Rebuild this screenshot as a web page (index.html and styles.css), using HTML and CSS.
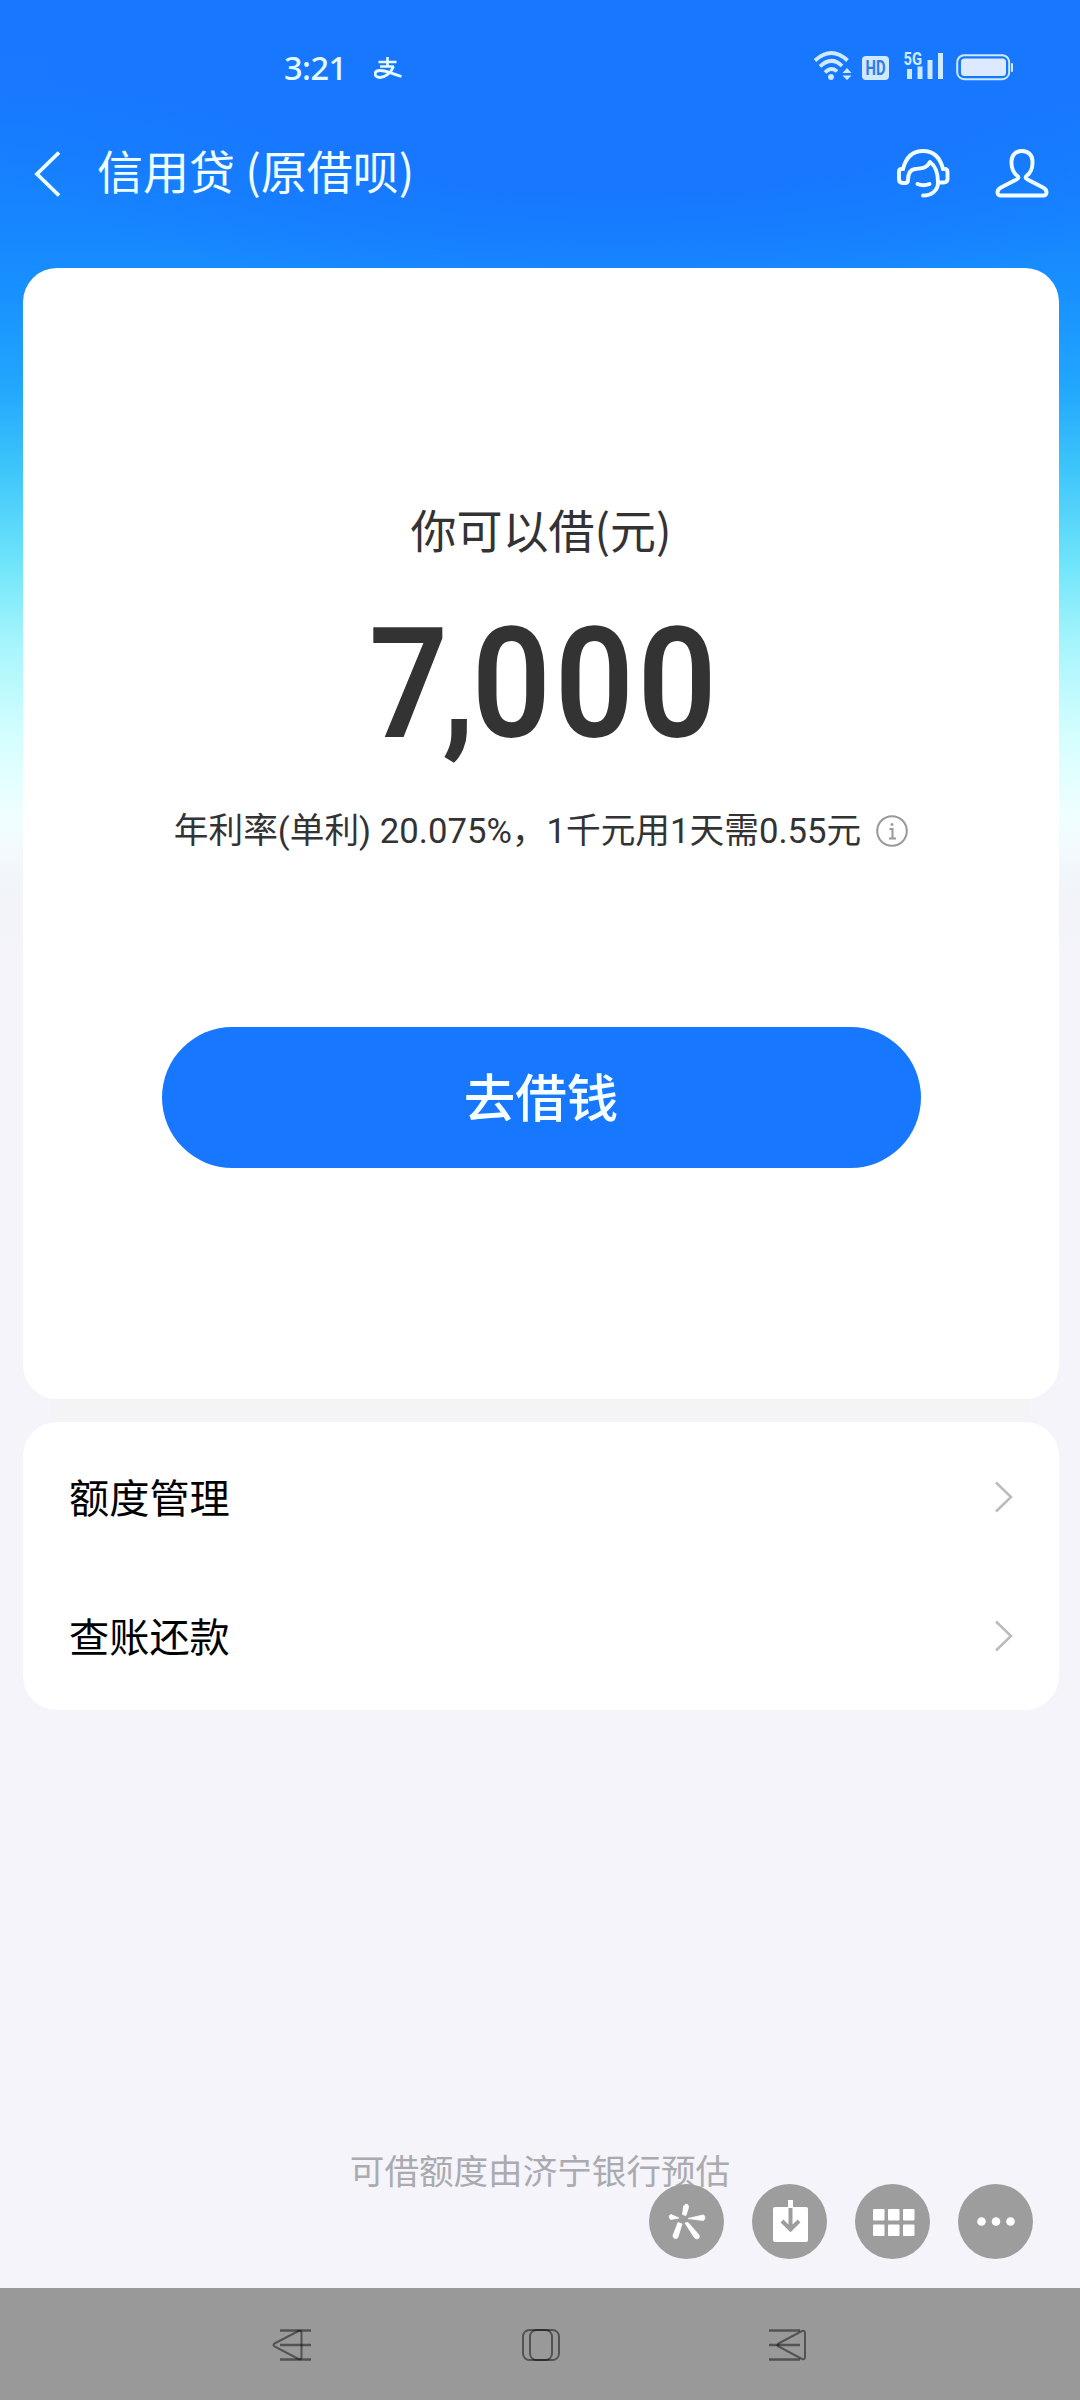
FILE: index.html
```html
<!DOCTYPE html>
<html lang="zh-CN">
<head>
<meta charset="utf-8">
<title>信用贷</title>
<link rel="stylesheet" href="styles.css">
</head>
<body>
<div class="screen">
  <div class="status">
    <span class="clock">3:21</span>
    <svg class="pay" viewBox="0 0 28 22" width="28" height="22" fill="none" stroke="#e6fbff"><path d="M4.500 5h18M13.500 0v9.500M6 9.500h14" stroke-width="2.600"/><path d="M19.500 9.500C17 16 11 20.500 6 20.500c-6.500 0-6.500-7 0-7 6 0 13 3.500 21.500 6" stroke-width="2.800"/></svg>
    <svg class="indicators" viewBox="0 -12 200 44" width="200" height="44" fill="#cfe9ff">
      <g fill="none" stroke="#cfe9ff" stroke-width="3.800"><path d="M1 9.500Q17.500-5.500 33.500 9.500"/><path d="M6 15.500Q17.500 4.500 28 15"/><path d="M11 21.500Q17.500 15 23 20.500"/></g>
      <circle cx="17" cy="26" r="2.900"/><path d="M28.500 22 33 17l4.500 5zM28.500 24.500h9L33 29z"/>
      <rect x="48" y="5" width="27" height="24" rx="4"/>
      <text class="hd" x="61.500" y="24" text-anchor="middle" textLength="20" lengthAdjust="spacingAndGlyphs">HD</text>
      <text class="fiveg" x="89.500" y="14" textLength="18.500" lengthAdjust="spacingAndGlyphs">5G</text>
      <path d="M93 18h5v10h-5zM103.500 15.500h5V28h-5zM113.500 9h5v19h-5zM124 2h5v26h-5z"/>
      <rect x="143.200" y="4.200" width="52" height="24" rx="7" fill="none" stroke="#cfe9ff" stroke-width="2"/><rect x="147" y="7.500" width="45" height="17.500" rx="3.500" fill="#dce9ff"/><rect x="197" y="12" width="2" height="9" rx="1"/>
    </svg>
  </div>
  <header class="bar">
    <svg class="back" viewBox="0 0 28 46" width="28" height="46" fill="none" stroke="#f0ffff" stroke-width="3.800"><path d="M25 1.500 3 23l22 21.500"/></svg>
    <h1 class="title">信用贷 (原借呗)</h1>
    <svg class="service" viewBox="0 0 54 50" width="54" height="50" fill="none" stroke="#f0ffff" stroke-width="3.900" stroke-linejoin="round" stroke-linecap="round"><path d="M7 21C10 9 17 3 27 3s17 6 20 18"/><path d="M7 21H5.500Q3 21 3 24v7q0 4 4 4h2q3 0 3-3 0-10 7-11c7-1 11 0 15-7 7 5 8 14 8 20.500C42 43 35 47.500 27 47.500"/><path d="M47 21h1.500q3 0 3 3v7q0 3.500-4 3.500h-5"/><path d="M21.500 36q6 2.500 12 0"/></svg>
    <svg class="user" viewBox="0 0 54 50" width="54" height="50" fill="none" stroke="#f0ffff" stroke-width="3.900" stroke-linejoin="round"><path d="M27 3C20 3 16 8 16.500 15c0 6 2 10 6 13 2 2 0 3-2 4L6 39.500C1 42 2 47.500 5 47.500h44c3 0 4-5.500-1-8L33.500 32c-2-1-4-2-2-4 4-3 6-7 6-13C38 8 34 3 27 3z"/></svg>
  </header>
  <main class="content">
    <section class="card loan">
      <p class="label">你可以借(元)</p>
      <p class="amount"><span class="seven">7</span><span class="comma">,</span>000</p>
      <p class="rate"><span class="rate-text">年利率(单利) 20.075%，1千元用1天需0.55元</span><svg viewBox="0 0 32 32" width="32" height="32" fill="none" stroke="#999" stroke-width="2"><circle cx="16" cy="16" r="14.800"/><path d="M13.500 14h3v9M13 23.500h7"/><circle cx="16" cy="9.500" r="1" fill="#999" stroke-width="1"/></svg></p>
      <button class="go">去借钱</button>
    </section>
    <section class="card menu">
      <div class="row"><span>额度管理</span><svg viewBox="0 0 18 32" width="18" height="32" fill="none" stroke="#bbb" stroke-width="2.500"><path d="M1 1.500l15 14.500L1 30.500"/></svg></div>
      <div class="row"><span>查账还款</span><svg viewBox="0 0 18 32" width="18" height="32" fill="none" stroke="#bbb" stroke-width="2.500"><path d="M1 1.500l15 14.500L1 30.500"/></svg></div>
    </section>
  </main>
  <p class="note">可借额度由济宁银行预估</p>
  <div class="tools">
    <svg viewBox="0 0 75 75" width="75" height="75"><circle cx="37.500" cy="37.500" r="37.500" fill="#9d9d9d"/><g fill="#fff" stroke="#fff" stroke-width=".8"><path d="M33.500 30.500 34.500 23c1-4 5.500-3.500 5 .5l-2.500 8zM30 34l-8-3.500c-2.500 0-2 4.500 0 5zM39 34.500l15-3.500c2.500 0 2.500 5 0 5.500zM29 38.500l-5 13c0 3.500 4 4 5 1.500l4-13zM36 39l9 14c2.500 3.500 6.500 1.500 5-2L39 38.500z"/></g></svg>
    <svg viewBox="0 0 75 75" width="75" height="75"><circle cx="37.500" cy="37.500" r="37.500" fill="#9d9d9d"/><rect x="21" y="23" width="35" height="35" rx="2" fill="#fff"/><path d="M38.500 16v8" stroke="#fff" stroke-width="5"/><path d="M38.500 24v21M30 37l8.500 8.500L47 37" fill="none" stroke="#9d9d9d" stroke-width="4"/></svg>
    <svg viewBox="0 0 75 75" width="75" height="75"><circle cx="37.500" cy="37.500" r="37.500" fill="#9d9d9d"/><g fill="#fff"><rect x="18" y="25" width="11.500" height="11.500" rx="1"/><rect x="33" y="25" width="11.500" height="11.500" rx="1"/><rect x="48" y="25" width="11.500" height="11.500" rx="1"/><rect x="18" y="40.500" width="11.500" height="11.500" rx="1"/><rect x="33" y="40.500" width="11.500" height="11.500" rx="1"/><rect x="48" y="40.500" width="11.500" height="11.500" rx="1"/></g></svg>
    <svg viewBox="0 0 75 75" width="75" height="75"><circle cx="37.500" cy="37.500" r="37.500" fill="#9d9d9d"/><g fill="#fff"><circle cx="23.500" cy="37.500" r="4.300"/><circle cx="38" cy="37.500" r="4.300"/><circle cx="52.500" cy="37.500" r="4.300"/></g></svg>
  </div>
  <nav class="nav">
    <svg viewBox="0 0 40 34" width="40" height="34" fill="none" stroke="#000" stroke-opacity=".46"><path d="M8 2.500h31M8 17h31M8 31.500h31" stroke-width="2.600"/><path d="M2.500 15.500 26.500 3q3-1 3 2v24q0 3-3 2L2.500 18.500q-2-1.500 0-3z" stroke-width="2"/></svg>
    <svg viewBox="0 0 40 34" width="40" height="34" fill="none" stroke="#000" stroke-opacity=".46" stroke-width="2"><rect x="3" y="2" width="29" height="30" rx="6.500"/><rect x="10" y="2" width="29" height="30" rx="6.500"/></svg>
    <svg viewBox="0 0 40 34" width="40" height="34" fill="none" stroke="#000" stroke-opacity=".46"><path d="M1 2.500h31M1 17h31M1 31.500h31" stroke-width="2.600"/><path d="M10.500 15.500 34 3q3-1 3 2v24q0 3-3 2L10.500 18.500q-2-1.500 0-3z" stroke-width="2"/></svg>
  </nav>
</div>
</body>
</html>
```
FILE: styles.css
```css
* { box-sizing: border-box; margin: 0; padding: 0; }
body { font-family: "Noto Sans CJK SC", sans-serif; }
svg { display: block; flex: none; }
.screen {
  position: relative;
  width: 1080px;
  height: 2400px;
  overflow: hidden;
  display: flex;
  flex-direction: column;
  background:
    radial-gradient(ellipse 700px 250px at 620px 60px, #1777ff 50%, rgba(23, 119, 255, 0) 100%),
    linear-gradient(#1777ff 0, #1779ff 90px, #1686ff 220px, #1890ff 290px, #21a6fd 385px, #3bc4fa 465px, #70e5fa 565px, #a7f5fc 645px, #d4fefe 735px, #efffff 815px, #f3f9fc 855px, #f1f4f9 890px, #f4f4fa 950px, #f4f4fa 100%);
}
.status { height: 120px; display: flex; padding: 0 66px 0 284px; }
.clock { width: 60px; margin-top: 44px; font: 500 32.500px/48px "Noto Sans", sans-serif; color: #e6fbff; white-space: nowrap; letter-spacing: -.5px; }
.pay { margin: 57px 0 0 30px; }
.indicators { margin: 39px 0 0 auto; }
.hd { font: 700 20px "Roboto", sans-serif; fill: #2c7cf0; }
.fiveg { font: 700 18px "Roboto", sans-serif; }
.bar { height: 148px; display: flex; align-items: flex-start; padding: 0 31px 0 34px; }
.back { margin: 31px 35px 0 0; }
.title { margin-top: 15px; font-size: 46px; line-height: 68px; font-weight: 400; color: #f0ffff; }
.service { margin: 28px 45px 0 auto; }
.user { margin-top: 28px; }
.content { display: flex; flex-direction: column; gap: 23px; padding: 0 21px 0 23px; background: linear-gradient(#f4f4f6, #f4f4f6) 50px 1130px / 980px 25px no-repeat; }
.card { background: #fff; border-radius: 34px; }
.loan { height: 1131px; display: flex; flex-direction: column; align-items: center; padding-top: 226px; color: #333; }
.label { font-size: 46px; line-height: 68px; }
.amount { margin-top: 48px; height: 150px; padding-left: 8px; font: 600 154px/150px "Roboto", sans-serif; letter-spacing: 4px; transform: scaleX(.9); }
.seven { letter-spacing: -7px; }
.comma { letter-spacing: -3px; }
.rate { margin-top: 45px; height: 52px; display: flex; align-items: center; gap: 15px; font-size: 34.700px; line-height: 52px; white-space: nowrap; }
.rate-text { font-family: "Roboto", "Noto Sans CJK SC", sans-serif; }
.go { margin-top: 170px; width: 759px; height: 141px; padding-bottom: 6px; border: 0; border-radius: 71px; background: #1777ff; color: #f5ffff; font: 500 51.500px/135px "Noto Sans CJK SC", sans-serif; }
.menu { height: 288px; padding: 5px 46px 5px 46px; color: #000; font-size: 40.200px; }
.row { height: 139px; display: flex; align-items: center; justify-content: space-between; }
.row span { padding-bottom: 3px; }
.note { margin-top: 433px; text-align: center; font-size: 34.600px; line-height: 52px; color: #aaaaaf; }
.tools { position: absolute; left: 649px; top: 2184px; display: flex; gap: 28px; }
.nav { margin-top: auto; height: 112px; padding: 40px 272px 0; display: flex; justify-content: space-between; background: #999; }
```
